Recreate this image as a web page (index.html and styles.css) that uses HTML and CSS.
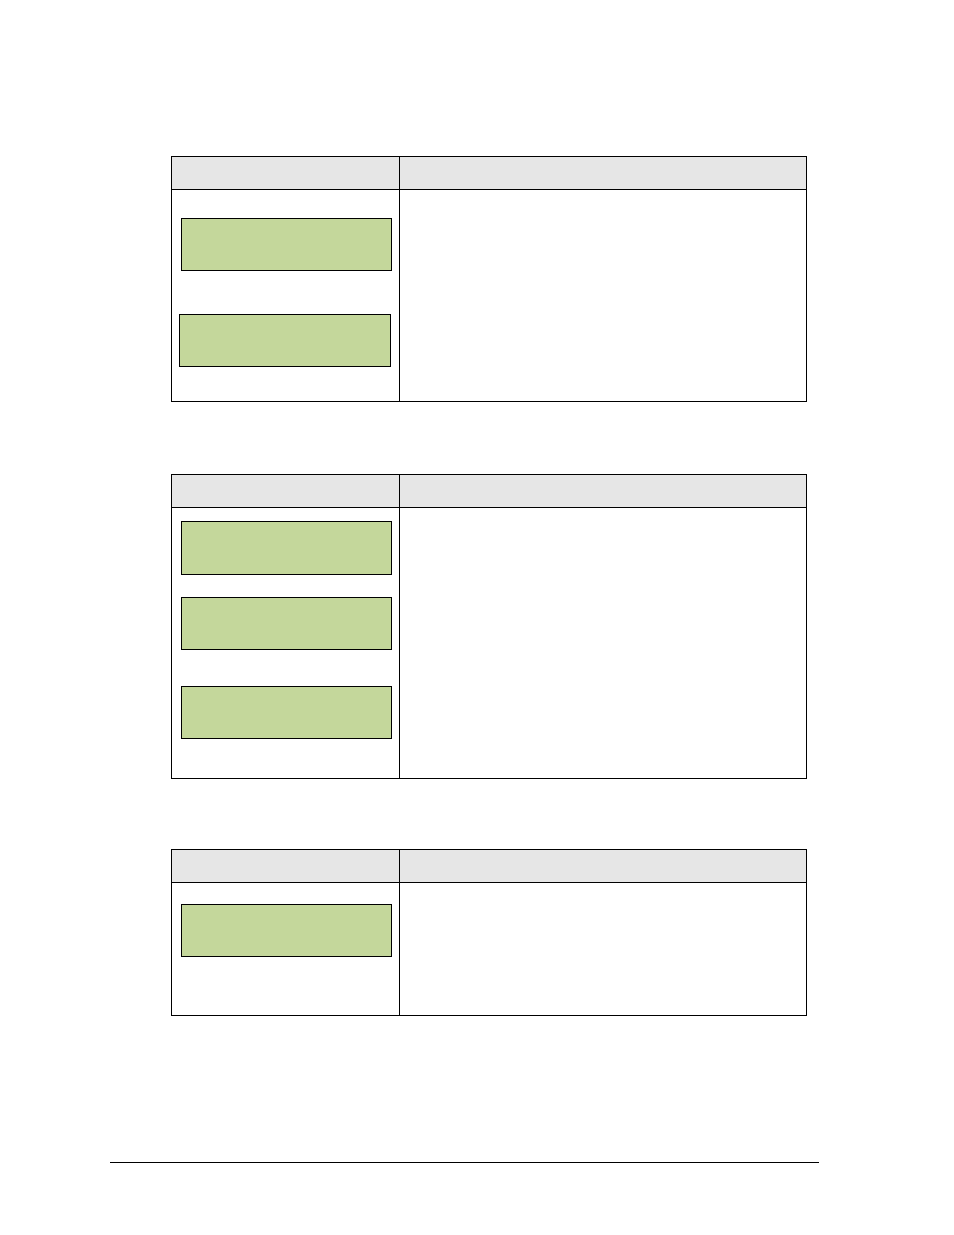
FILE: index.html
```html
<!DOCTYPE html>
<html>
<head>
<meta charset="utf-8">
<link rel="stylesheet" href="styles.css">
</head>
<body>
<main class="page">
  <section class="tbl t1">
    <div class="hd left"></div>
    <div class="hd"></div>
    <div class="cell left">
      <div class="lcd b1"></div>
      <div class="lcd b2"></div>
    </div>
    <div class="cell"></div>
  </section>
  <section class="tbl t2">
    <div class="hd left"></div>
    <div class="hd"></div>
    <div class="cell left">
      <div class="lcd c1"></div>
      <div class="lcd c2"></div>
      <div class="lcd c3"></div>
    </div>
    <div class="cell"></div>
  </section>
  <section class="tbl t3">
    <div class="hd left"></div>
    <div class="hd"></div>
    <div class="cell left">
      <div class="lcd d1"></div>
    </div>
    <div class="cell"></div>
  </section>
</main>
<footer class="rule"></footer>
</body>
</html>
```
FILE: styles.css
```css
html, body {
  margin: 0;
  padding: 0;
  background: #ffffff;
  font-family: "Liberation Sans", Arial, sans-serif;
}
.page {
  padding-top: 156px;
  padding-left: 171px;
  display: flex;
  flex-direction: column;
}
.tbl {
  box-sizing: border-box;
  width: 636px;
  border: 1px solid #000;
  display: grid;
  grid-template-columns: 228px 1fr;
}
.t2 { margin-top: 72px; }
.t3 { margin-top: 70px; }
.hd {
  box-sizing: border-box;
  height: 33px;
  background: #e6e6e6;
  border-bottom: 1px solid #000;
}
.left {
  border-right: 1px solid #000;
}
.cell {
  box-sizing: border-box;
  display: flex;
  flex-direction: column;
  align-items: flex-start;
}
.t1 .cell { height: 211px; }
.t2 .cell { height: 270px; }
.t3 .cell { height: 132px; }
.lcd {
  box-sizing: border-box;
  width: 211px;
  height: 53px;
  background: #c4d79b;
  border: 1px solid #000;
}
.b1 { margin: 28px 0 0 9px; }
.b2 { margin: 43px 0 0 7px; width: 212px; }
.c1 { margin: 13px 0 0 9px; height: 54px; }
.c2 { margin: 22px 0 0 9px; }
.c3 { margin: 36px 0 0 9px; }
.d1 { margin: 21px 0 0 9px; }
.rule {
  margin: 146px 0 0 110px;
  width: 709px;
  border-top: 1px solid #000;
}
```
